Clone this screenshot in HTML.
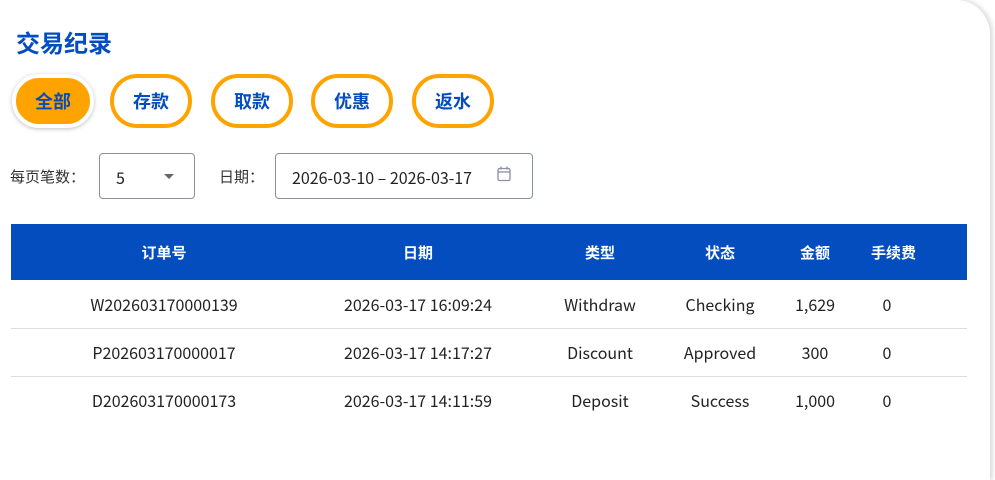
<!DOCTYPE html>
<html><head><meta charset="utf-8"><style>
*{margin:0;padding:0;box-sizing:border-box}
html,body{width:995px;height:423px;overflow:hidden;background:#fff;font-family:"Noto Sans CJK SC","Liberation Sans",sans-serif;color:#222}
.card{position:absolute;left:-40px;top:0;width:1030px;height:480px;background:#fff;border-top-right-radius:34px;box-shadow:2px 0 6px rgba(0,0,0,.18)}
.t{position:absolute;left:16px;top:26px;font-size:24px;font-weight:bold;color:#034dbf;line-height:32px}
.b{position:absolute;top:74px;width:82px;height:54px;border:4px solid #ffa300;border-radius:27px;background:#fff;color:#034dbf;font-weight:bold;font-size:18px;text-align:center;line-height:46px}
.b.a{background:#ffa300;border-color:#fff;box-shadow:0 1px 4px rgba(0,0,0,.25)}
.l{position:absolute;top:167px;font-size:15px;color:#333;line-height:20px}
.box{position:absolute;top:153px;height:46px;border:1px solid #8a8fa8;border-radius:4px;font-size:16px;line-height:46px}
table{position:absolute;left:11px;top:224px;width:956px;border-collapse:collapse;font-size:16px;table-layout:fixed}
th{background:#034dbf;color:#fff;height:56px;font-weight:bold;font-size:15px;white-space:nowrap}
td{height:48px;text-align:center;border-bottom:1px solid #ddd;color:#222;white-space:nowrap}
tr:last-child td{border-bottom:none}
</style></head><body>
<div class="card"></div>
<div class="t">交易纪录</div>
<div class="b a" style="left:12px">全部</div>
<div class="b" style="left:110px">存款</div>
<div class="b" style="left:211px">取款</div>
<div class="b" style="left:311px">优惠</div>
<div class="b" style="left:412px">返水</div>
<div class="l" style="left:10px">每页笔数：</div>
<div class="box" style="left:99px;width:96px;padding-left:16px">5<span style="position:absolute;left:64px;top:20px;border-left:5px solid transparent;border-right:5px solid transparent;border-top:5px solid #666"></span></div>
<div class="l" style="left:219px">日期：</div>
<div class="box" style="left:275px;width:258px;padding-left:16px">2026-03-10 – 2026-03-17
<svg style="position:absolute;left:221px;top:12px" width="14" height="16" viewBox="0 0 14 16"><rect x="1" y="2.5" width="12" height="12" rx="1.5" fill="none" stroke="#8a8fa8" stroke-width="1.3"/><line x1="1" y1="6" x2="13" y2="6" stroke="#8a8fa8" stroke-width="1.3"/><line x1="4" y1="0.5" x2="4" y2="3.5" stroke="#8a8fa8" stroke-width="1.3"/><line x1="10" y1="0.5" x2="10" y2="3.5" stroke="#8a8fa8" stroke-width="1.3"/></svg></div>
<table>
<colgroup><col style="width:306px"><col style="width:202px"><col style="width:162px"><col style="width:78px"><col style="width:112px"><col style="width:32px"><col></colgroup>
<tr><th>订单号</th><th>日期</th><th>类型</th><th>状态</th><th>金额</th><th>手续费</th><th></th></tr>
<tr><td>W202603170000139</td><td>2026-03-17 16:09:24</td><td>Withdraw</td><td>Checking</td><td>1,629</td><td>0</td><td></td></tr>
<tr><td>P202603170000017</td><td>2026-03-17 14:17:27</td><td>Discount</td><td>Approved</td><td>300</td><td>0</td><td></td></tr>
<tr><td>D202603170000173</td><td>2026-03-17 14:11:59</td><td>Deposit</td><td>Success</td><td>1,000</td><td>0</td><td></td></tr>
</table>
</body></html>
